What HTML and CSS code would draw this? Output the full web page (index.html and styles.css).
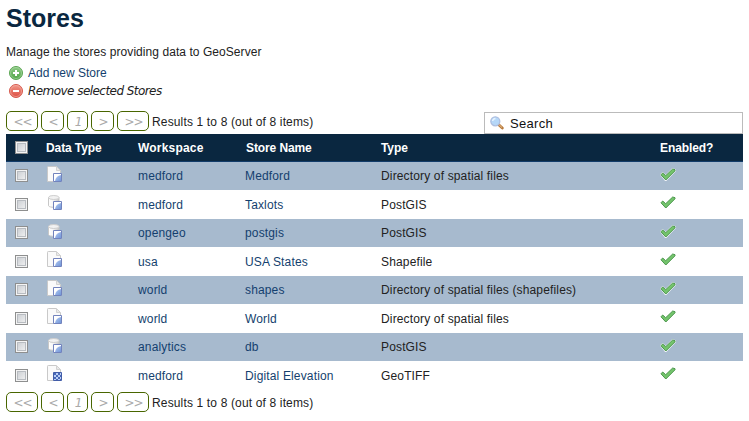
FILE: index.html
```
<!DOCTYPE html>
<html lang="en">
<head>
<meta charset="utf-8">
<title>Stores</title>
<link rel="stylesheet" href="styles.css">
</head>
<body>
<svg width="0" height="0" class="defs" aria-hidden="true">
  <defs>
    <linearGradient id="green" x2="0" y2="1"><stop stop-color="#8fca86"/><stop offset="1" stop-color="#4fa446"/></linearGradient>
    <linearGradient id="red" x2="0" y2="1"><stop stop-color="#f19a8c"/><stop offset="1" stop-color="#dc4b40"/></linearGradient>
    <linearGradient id="blue" x2="1" y2="1"><stop stop-color="#b4cbf2"/><stop offset="1" stop-color="#7296d8"/></linearGradient>
    <linearGradient id="can"><stop stop-color="#fff"/><stop offset=".45" stop-color="#f5f5f5"/><stop offset="1" stop-color="#c3c3c3"/></linearGradient>
    <symbol id="badge" viewBox="0 0 16 16"><path d="M6.500 7.500h8v8h-8z" fill="#fff" stroke="#7283bd"/><path d="M14 9v6H8C8.500 12 10.500 9.500 14 9z" fill="url(#blue)"/></symbol>
    <symbol id="page" viewBox="0 0 16 16"><path d="M.5 15.500V1.300Q.5.500 1.300.500H9.500L13.500 4.500V15.500z" fill="#fafafa" stroke="#c9c9c9"/><path d="M9.500.8V4.500h3.700" fill="#e8e8e8" stroke="#d2d2d2"/></symbol>
    <symbol id="vector" viewBox="0 0 16 16"><use href="#page"/><use href="#badge"/></symbol>
    <symbol id="database" viewBox="0 0 16 16"><path d="M1.500 3.500v8.300c1 2 9.500 2 10.500 0V3.500z" fill="url(#can)" stroke="#c7c7c7"/><ellipse cx="6.750" cy="3.500" rx="5.250" ry="2" fill="#f2f2f2" stroke="#cecece"/><use href="#badge"/></symbol>
    <symbol id="raster" viewBox="0 0 16 16"><use href="#page"/><path d="M6.500 7.500h8v8h-8z" fill="#b9cef5" stroke="#425da8"/><path d="M7 8h2v2H7zM11 8h2v2h-2zM9 10h2v2H9zM13 10h1v2h-1zM7 12h2v2H7zM11 12h2v2h-2zM9 14h2v1H9zM13 14h1v1h-1z" fill="#4968b7"/></symbol>
    <symbol id="check" viewBox="0 0 16 13"><path d="M0 6.500L2.600 3.900 5.700 6.700 12.500 0 16 1.500V3L6.300 13H5z" fill="#fff" fill-opacity=".85"/><path d="M1 6.800L2.700 5 5.700 7.700 12.700 1 15 1.700V2.800L5.800 12z" fill="#74c46c" stroke="#4b974c" stroke-linejoin="round"/></symbol>
  </defs>
</svg>
<main class="content">
  <h1>Stores</h1>
  <p class="intro">Manage the stores providing data to GeoServer</p>
  <ul class="actions">
    <li><svg viewBox="0 0 14 14"><circle cx="7" cy="7" r="6.500" fill="url(#green)" stroke="#5ba653"/><circle cx="7" cy="7" r="5.500" fill="none" stroke="#b3dbad" stroke-opacity=".6"/><path d="M7 4v6M4 7h6" stroke="#fff" stroke-width="2"/></svg><a class="add">Add new Store</a></li>
    <li><svg viewBox="0 0 14 14"><circle cx="7" cy="7" r="6.500" fill="url(#red)" stroke="#d65a4e"/><circle cx="7" cy="7" r="5.500" fill="none" stroke="#f5b5ab" stroke-opacity=".6"/><path d="M4 7h6" stroke="#fff" stroke-width="2"/></svg><em>Remove selected Stores</em></li>
  </ul>
  <div class="toolbar">
    <div class="pager"><span class="wide">&lt;&lt;</span><span>&lt;</span><span class="num">1</span><span>&gt;</span><span class="wide">&gt;&gt;</span><b>Results 1 to 8 (out of 8 items)</b></div>
    <div class="search"><svg viewBox="0 0 14 14"><path d="M8.500 8.500L12.300 12" stroke="#b77a3d" stroke-width="2.800" stroke-linecap="round"/><path d="M9 8.700L12 11.500" stroke="#e9c08b" stroke-width="1"/><circle cx="5.300" cy="5.300" r="4.500" fill="#b5d7f8" stroke="#aebfe0" stroke-width="1.300"/><path d="M2.600 5Q3 2.600 5.500 2.400" fill="none" stroke="#e7f4ff" stroke-width="1.500"/></svg><span>Search</span></div>
  </div>
  <div class="table">
    <div class="row head"><i class="box"></i><span>Data Type</span><span class="workspace">Workspace</span><span class="name">Store Name</span><span>Type</span><span>Enabled?</span></div>
    <div class="row"><i class="box"></i><svg class="icon"><use href="#vector"/></svg><a>medford</a><a>Medford</a><span>Directory of spatial files</span><svg class="tick"><use href="#check"/></svg></div>
    <div class="row"><i class="box"></i><svg class="icon"><use href="#database"/></svg><a>medford</a><a>Taxlots</a><span>PostGIS</span><svg class="tick"><use href="#check"/></svg></div>
    <div class="row"><i class="box"></i><svg class="icon"><use href="#database"/></svg><a>opengeo</a><a>postgis</a><span>PostGIS</span><svg class="tick"><use href="#check"/></svg></div>
    <div class="row"><i class="box"></i><svg class="icon"><use href="#vector"/></svg><a>usa</a><a>USA States</a><span>Shapefile</span><svg class="tick"><use href="#check"/></svg></div>
    <div class="row"><i class="box"></i><svg class="icon"><use href="#vector"/></svg><a>world</a><a>shapes</a><span>Directory of spatial files (shapefiles)</span><svg class="tick"><use href="#check"/></svg></div>
    <div class="row"><i class="box"></i><svg class="icon"><use href="#vector"/></svg><a>world</a><a>World</a><span>Directory of spatial files</span><svg class="tick"><use href="#check"/></svg></div>
    <div class="row"><i class="box"></i><svg class="icon"><use href="#database"/></svg><a>analytics</a><a>db</a><span>PostGIS</span><svg class="tick"><use href="#check"/></svg></div>
    <div class="row"><i class="box"></i><svg class="icon"><use href="#raster"/></svg><a>medford</a><a>Digital Elevation</a><span>GeoTIFF</span><svg class="tick"><use href="#check"/></svg></div>
  </div>
  <div class="pager bottom"><span class="wide">&lt;&lt;</span><span>&lt;</span><span class="num">1</span><span>&gt;</span><span class="wide">&gt;&gt;</span><b>Results 1 to 8 (out of 8 items)</b></div>
</main>
</body>
</html>
```
FILE: styles.css
```
* { box-sizing: border-box; }
body {
  margin: 0;
  background: #fff;
  color: #222;
  font: 12px/16px "Liberation Sans", Arial, sans-serif;
  overflow: hidden;
}
.defs { position: absolute; }
.content { width: 743px; padding-left: 6px; white-space: nowrap; }
h1 { margin: 0; padding-top: 3px; height: 44px; font-size: 25px; line-height: 30px; color: #0a2740; }
.intro { margin: 0; height: 21px; letter-spacing: .06px; }
.actions { margin: 0; padding: 0 0 0 3px; list-style: none; height: 46px; }
.actions li { display: flex; align-items: center; height: 16px; margin-bottom: 3px; }
.actions li:last-child { margin-top: -1px; }
.actions svg { width: 14px; height: 14px; margin-right: 5px; }
a { color: #143f6e; }
.actions em { font: italic 12px/16px "DejaVu Sans", sans-serif; letter-spacing: -.55px; padding-bottom: 1px; }
.toolbar { display: flex; justify-content: space-between; height: 23px; }
.pager { display: flex; gap: 3px; height: 20px; }
.pager span {
  width: 23px;
  height: 20px;
  padding-left: 1px;
  border: 1px solid #496600;
  border-radius: 5px;
  color: #aaa;
  font: italic 12px/20px "DejaVu Sans", sans-serif;
  letter-spacing: -1px;
  text-align: center;
}
.pager .wide { width: 32px; }
.pager .num { width: 21px; }
.pager b { font-weight: normal; line-height: 22px; letter-spacing: .15px; }
.bottom { margin-top: 2px; }
.search { display: flex; align-items: center; width: 259px; height: 22px; margin-top: 1px; padding-left: 5px; border: 1px solid #bbb; color: #111; font-size: 13px; letter-spacing: .3px; }
.search span { padding-top: 1px; }
.search svg { width: 14px; height: 14px; margin-right: 6px; }
.row {
  display: grid;
  grid-template-columns: 31px 92px 107px 136px 279px 1fr;
  align-items: start;
  height: 29px;
  padding-left: 9px;
  letter-spacing: .15px;
}
.row > span, .row > a { padding-top: 7px; }
.row:nth-child(even) { height: 28px; background: #a7bace; }
.row:nth-child(even) > span, .row:nth-child(even) > a { padding-top: 6px; }
.row.head { height: 28px; background: #0a2740; border-bottom: 1px solid #123c69; color: #fff; font-weight: bold; letter-spacing: -.1px; }
.row.head > span { padding-top: 6px; }
.row.head > .workspace { letter-spacing: .2px; }
.row.head > .name { padding-left: 1px; }
.box { width: 13px; height: 13px; margin-top: 8px; border: 1px solid #8e8f8f; background: linear-gradient(135deg, #c5c9ce, #f6f6f6); box-shadow: inset 0 0 0 1px #f4f4f4, inset 0 0 0 2px #b8bcc1; }
.row:nth-child(even) .box, .head .box { margin-top: 7px; }
.icon { width: 16px; height: 16px; margin: 4px 0 0 1px; }
.tick { width: 16px; height: 13px; margin-top: 6px; }
```
